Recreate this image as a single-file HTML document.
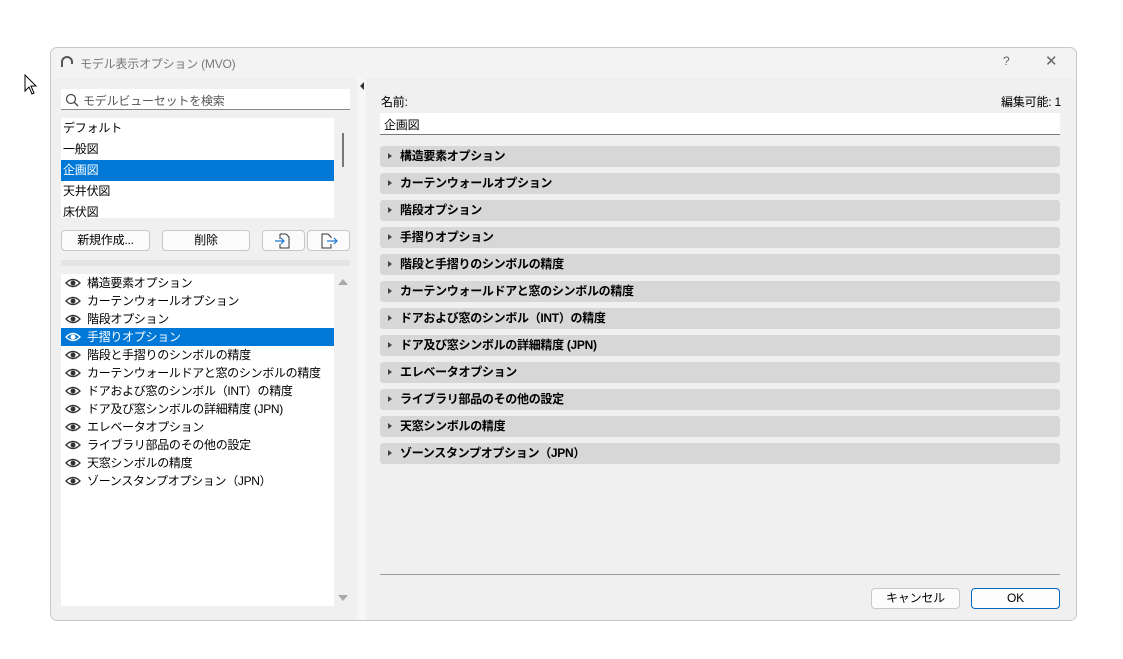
<!DOCTYPE html>
<html><head><meta charset="utf-8"><style>
*{box-sizing:border-box;margin:0;padding:0}
body{width:1123px;height:659px;background:#fff;position:relative;overflow:hidden;font-family:"Liberation Sans","Noto Sans CJK JP",sans-serif;font-size:12px;color:#000;letter-spacing:-0.2px}
.a{position:absolute}
.win{left:50px;top:47px;width:1027px;height:574px;background:#f0f0f0;border:1px solid #c8c8c8;border-radius:7px;overflow:hidden}
.in{position:absolute;left:-1px;top:-1px;width:1027px;height:574px}
.title{left:0;top:0;width:100%;height:31px;background:#f3f3f3;color:#777;font-size:12px}
.btn{background:#fbfbfb;border:1px solid #c8c8c8;border-radius:4px;text-align:center;line-height:18px;font-size:12px}
.row{position:absolute;left:0;width:273px;height:18px;line-height:18px;padding-left:26px;font-size:12px;white-space:nowrap;letter-spacing:-0.3px}
.row svg{position:absolute;left:4px;top:4px}
.sel{background:#0078d7;color:#fff}
.prow{position:absolute;left:2px;height:21px;line-height:21px;font-size:12px;width:271px}
.sec{position:absolute;left:330px;width:680px;height:21px;background:#d7d7d7;border-radius:3px;font-weight:bold;font-size:12px;line-height:21px;padding-left:20px;letter-spacing:-0.3px}
.sec:before{content:"";position:absolute;left:8px;top:7px;border-left:4px solid #444;border-top:3.5px solid transparent;border-bottom:3.5px solid transparent}
</style></head><body>
<svg class="a" style="left:24px;top:74px" width="14" height="22" viewBox="0 0 14 22"><path d="M1 1 L1 17 L5 13 L8 20 L10 19 L7 12 L12 12 Z" fill="#fff" stroke="#000" stroke-width="1"/></svg>
<div class="a win"><div class="in">
 <div class="a title">
  <svg class="a" style="left:11px;top:9px" width="12" height="12" viewBox="0 0 12 12"><path d="M1 11 V6 A5 5 0 0 1 11 6 V8" fill="none" stroke="#555" stroke-width="2"/></svg>
  <span class="a" style="left:30px;top:8px">モデル表示オプション (MVO)</span>
  <span class="a" style="left:953px;top:7px;color:#666">?</span>
  <span class="a" style="left:995px;top:5px;color:#666;font-size:15px">✕</span>
 </div>
 <div class="a" style="left:11px;top:42px;width:289px;height:21px;background:#fff;border-bottom:1px solid #888"></div>
 <svg class="a" style="left:15px;top:46px" width="14" height="14" viewBox="0 0 14 14"><circle cx="6" cy="6" r="4.5" fill="none" stroke="#444" stroke-width="1.2"/><path d="M9.3 9.3 L13 13" stroke="#444" stroke-width="1.3"/></svg>
 <span class="a" style="left:33px;top:45px;color:#555">モデルビューセットを検索</span>
 <div class="a" style="left:11px;top:71px;width:273px;height:100px;background:#fff;overflow:hidden">
  <div class="prow" style="top:0">デフォルト</div>
  <div class="prow" style="top:21px">一般図</div>
  <div class="prow sel" style="top:42px;left:0;width:273px;padding-left:2px">企画図</div>
  <div class="prow" style="top:63px">天井伏図</div>
  <div class="prow" style="top:84px">床伏図</div>
 </div>
 <div class="a" style="left:292px;top:86px;width:2px;height:34px;background:#777"></div>
 <div class="a btn" style="left:11px;top:183px;width:89px;height:21px">新規作成...</div>
 <div class="a btn" style="left:112px;top:183px;width:88px;height:21px">削除</div>
 <div class="a btn" style="left:212px;top:183px;width:43px;height:21px"><svg width="20" height="18" viewBox="0 0 20 18" style="margin-top:1px"><path d="M6 2 H12 L15 5 V16 H6 V12 M6 7 V2" fill="none" stroke="#333"/><path d="M1 9 H10 M7 6 L10 9 L7 12" fill="none" stroke="#1e7ad8" stroke-width="1.2"/></svg></div>
 <div class="a btn" style="left:257px;top:183px;width:43px;height:21px"><svg width="20" height="18" viewBox="0 0 20 18" style="margin-top:1px"><path d="M12 6 V5 L9 2 H3 V16 H12 V12" fill="none" stroke="#333"/><path d="M8 9 H18 M15 6 L18 9 L15 12" fill="none" stroke="#1e7ad8" stroke-width="1.2"/></svg></div>
 <div class="a" style="left:11px;top:213px;width:289px;height:6px;background:#e4e4e4"></div>
 <div class="a" style="left:11px;top:227px;width:273px;height:332px;background:#fff">
  <div class="row" style="top:0">構造要素オプション</div>
  <div class="row" style="top:18px">カーテンウォールオプション</div>
  <div class="row" style="top:36px">階段オプション</div>
  <div class="row sel" style="top:54px">手摺りオプション</div>
  <div class="row" style="top:72px">階段と手摺りのシンボルの精度</div>
  <div class="row" style="top:90px">カーテンウォールドアと窓のシンボルの精度</div>
  <div class="row" style="top:108px">ドアおよび窓のシンボル（INT）の精度</div>
  <div class="row" style="top:126px">ドア及び窓シンボルの詳細精度 (JPN)</div>
  <div class="row" style="top:144px">エレベータオプション</div>
  <div class="row" style="top:162px">ライブラリ部品のその他の設定</div>
  <div class="row" style="top:180px">天窓シンボルの精度</div>
  <div class="row" style="top:198px">ゾーンスタンプオプション（JPN）</div>
 </div>
 <div class="a" style="left:288px;top:232px;border-bottom:6px solid #aaa;border-left:5px solid transparent;border-right:5px solid transparent"></div>
 <div class="a" style="left:288px;top:548px;border-top:6px solid #aaa;border-left:5px solid transparent;border-right:5px solid transparent"></div>
 <div class="a" style="left:307px;top:31px;width:9px;height:543px;background:#f6f6f6"></div>
 <div class="a" style="left:310px;top:35px;border-right:4px solid #333;border-top:4px solid transparent;border-bottom:4px solid transparent"></div>
 <span class="a" style="left:331px;top:46px">名前:</span>
 <span class="a" style="right:16px;top:46px">編集可能: 1</span>
 <div class="a" style="left:330px;top:66px;width:680px;height:22px;background:#fff;border-bottom:1px solid #777;padding:3px 4px">企画図</div>
 <div class="sec" style="top:99px">構造要素オプション</div>
 <div class="sec" style="top:126px">カーテンウォールオプション</div>
 <div class="sec" style="top:153px">階段オプション</div>
 <div class="sec" style="top:180px">手摺りオプション</div>
 <div class="sec" style="top:207px">階段と手摺りのシンボルの精度</div>
 <div class="sec" style="top:234px">カーテンウォールドアと窓のシンボルの精度</div>
 <div class="sec" style="top:261px">ドアおよび窓のシンボル（INT）の精度</div>
 <div class="sec" style="top:288px">ドア及び窓シンボルの詳細精度 (JPN)</div>
 <div class="sec" style="top:315px">エレベータオプション</div>
 <div class="sec" style="top:342px">ライブラリ部品のその他の設定</div>
 <div class="sec" style="top:369px">天窓シンボルの精度</div>
 <div class="sec" style="top:396px">ゾーンスタンプオプション（JPN）</div>
 <div class="a" style="left:330px;top:527px;width:680px;height:1px;background:#999"></div>
 <div class="a btn" style="left:821px;top:541px;width:89px;height:21px">キャンセル</div>
 <div class="a btn" style="left:921px;top:541px;width:89px;height:21px;border-color:#0067c0;background:#fdfdfd">OK</div>
</div></div>
<script>
document.querySelectorAll('.row').forEach(function(r){var c=r.classList.contains('sel')?'#fff':'#333';r.insertAdjacentHTML('afterbegin','<svg width="16" height="10" viewBox="0 0 16 10"><path d="M1 5 Q8 -2 15 5 Q8 12 1 5Z" fill="none" stroke="'+c+'" stroke-width="1.3"/><circle cx="8" cy="5" r="2.5" fill="'+c+'"/></svg>')});
</script>
</body></html>
